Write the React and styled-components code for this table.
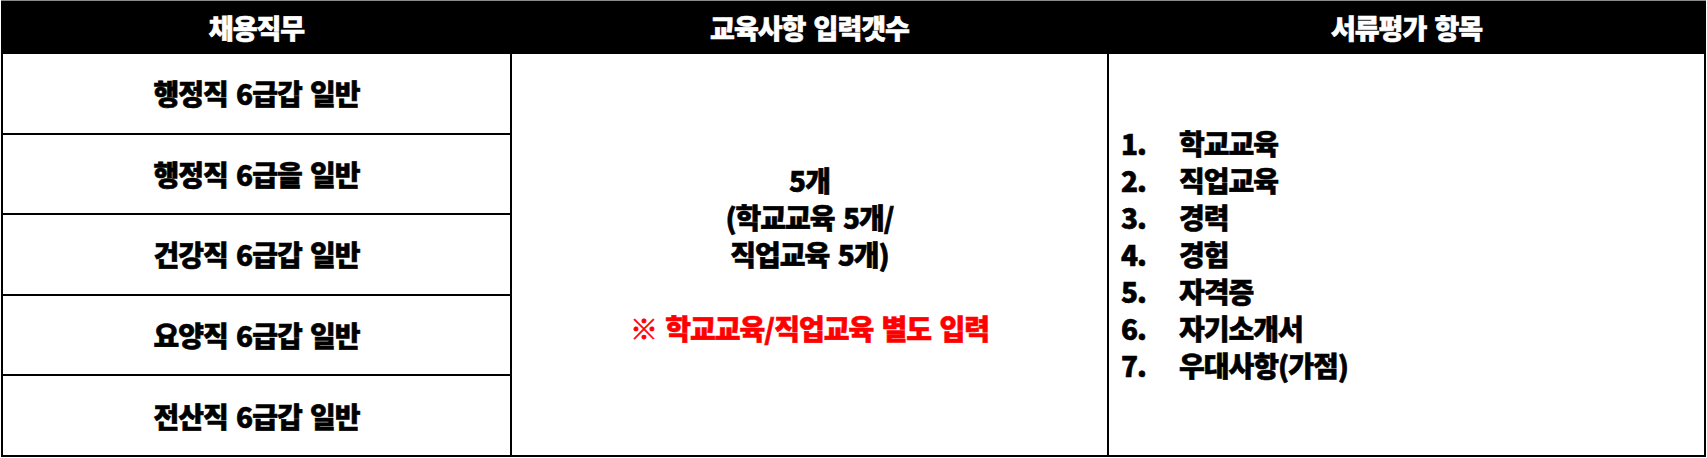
import React from 'react';
import styled, { createGlobalStyle } from 'styled-components';

const GlobalStyle = createGlobalStyle`
  html, body {
    margin: 0;
    padding: 0;
    background: #ffffff;
  }
  body {
    font-family: "Noto Sans CJK KR", "Noto Sans", sans-serif;
  }
`;

const Page = styled.div`
  width: 1707px;
  height: 458px;
  padding: 0 1px 1px 1px;
  box-sizing: border-box;
`;

const Table = styled.div`
  display: grid;
  grid-template-columns: 507px 595px 1fr;
  grid-template-rows: 50px repeat(5, 1fr);
  gap: 2px;
  padding: 1px 2px 2px 2px;
  height: 100%;
  box-sizing: border-box;
  background: #000;
  border-top: 1px solid #8a8a8a;
`;

// heavy text, close to the condensed display face in the original
const heavy = `
  font-weight: 900;
  letter-spacing: -1px;
  word-spacing: 3px;
  -webkit-text-stroke: 0.6px currentColor;
`;

const HeadCell = styled.div`
  display: flex;
  align-items: center;
  justify-content: center;
  background: #000;
  color: #fff;
  font-size: 27px;
  ${heavy}
`;

const JobCell = styled.div`
  grid-column: 1;
  display: flex;
  align-items: center;
  justify-content: center;
  background: #fff;
  color: #000;
  font-size: 28px;
  ${heavy}
`;

const SpanCell = styled.div`
  grid-column: ${(p) => p.$col};
  grid-row: 2 / 7;
  display: flex;
  flex-direction: column;
  justify-content: center;
  align-items: ${(p) => (p.$left ? 'flex-start' : 'center')};
  padding: ${(p) => (p.$left ? '0 12px' : '0')};
  background: #fff;
  color: #000;
  font-size: 28px;
  line-height: 37px;
  text-align: center;
  ${heavy}
`;

const Line = styled.div`
  color: ${(p) => (p.$red ? '#ff0000' : '#000')};
  min-height: 37px;
`;

const List = styled.ol`
  list-style: none;
  margin: 0;
  padding: 0;
  text-align: left;
`;

const Item = styled.li`
  display: grid;
  grid-template-columns: 58px auto;
`;

const jobs = [
  '행정직 6급갑 일반',
  '행정직 6급을 일반',
  '건강직 6급갑 일반',
  '요양직 6급갑 일반',
  '전산직 6급갑 일반',
];

const criteria = ['학교교육', '직업교육', '경력', '경험', '자격증', '자기소개서', '우대사항(가점)'];

export default function App() {
  return (
    <>
      <GlobalStyle />
      <Page>
        <Table>
          <HeadCell>채용직무</HeadCell>
          <HeadCell>교육사항 입력갯수</HeadCell>
          <HeadCell>서류평가 항목</HeadCell>
          {jobs.map((job) => (
            <JobCell key={job}>{job}</JobCell>
          ))}
          <SpanCell $col={2}>
            <Line>5개</Line>
            <Line>(학교교육 5개/</Line>
            <Line>직업교육 5개)</Line>
            <Line />
            <Line $red>※ 학교교육/직업교육 별도 입력</Line>
          </SpanCell>
          <SpanCell $col={3} $left>
            <List>
              {criteria.map((c, i) => (
                <Item key={c}>
                  <span>{i + 1}.</span>
                  <span>{c}</span>
                </Item>
              ))}
            </List>
          </SpanCell>
        </Table>
      </Page>
    </>
  );
}
